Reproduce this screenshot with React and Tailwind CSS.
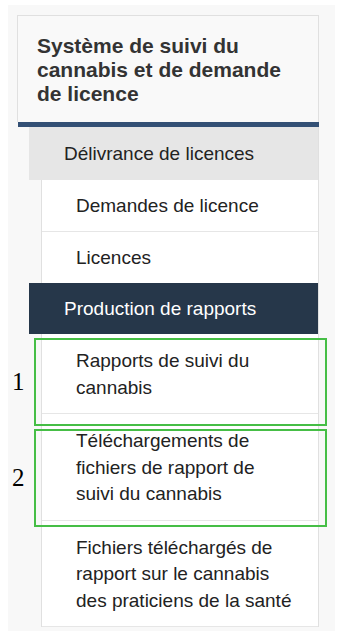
const subItems = [
  { label: "Demandes de licence" },
  { label: "Licences" },
];

const reportItems = [
  { label: "Rapports de suivi du cannabis", lines: ["Rapports de suivi du", "cannabis"] },
  { label: "Téléchargements", lines: ["Téléchargements de", "fichiers de rapport de", "suivi du cannabis"] },
  { label: "Fichiers", lines: ["Fichiers téléchargés de", "rapport sur le cannabis", "des praticiens de la santé"] },
];

function Annotation({ top, height, num }) {
  return (
    <>
      <div
        className="absolute left-[34px] w-[293px] border-2 border-[#46be46]"
        style={{ top, height }}
      />
      <span
        className="absolute left-[12px] text-[25px] leading-none text-black"
        style={{ top: top + height / 2 - 13, fontFamily: '"Liberation Serif", serif' }}
      >
        {num}
      </span>
    </>
  );
}

export default function App() {
  return (
    <div className="relative h-[635px] w-[347px] bg-white" style={{ fontFamily: '"Liberation Sans", Arial, sans-serif' }}>
      <div className="ml-[8px] mt-[5px] w-[327px] bg-[#f8f8f8] pb-[4px] pl-[9px] pt-[10px] pr-[16px]">
        <nav className="w-[302px]">
          <div className="border border-b-0 border-[#e0e0e0] bg-[#f9f9f9] pb-[16px] pl-[19px] pr-[10px] pt-[18px]">
            <h2 className="text-[21px] font-bold leading-[24px] text-[#333]">
              Système de suivi du cannabis et de demande de licence
            </h2>
          </div>
          <div className="ml-px h-[5px] bg-[#335075]" />

          <div className="ml-[12px] border-r border-[#e0e0e0]">
            <div className="bg-[#e6e6e6] py-[13px] pl-[35px] text-[19px] leading-[27px] text-[#222]">
              Délivrance de licences
            </div>
            <ul className="ml-[12px] border-l border-[#e0e0e0] bg-white">
              {subItems.map((item) => (
                <li
                  key={item.label}
                  className="border-b border-[#e6e6e6] py-[12px] pl-[34px] text-[19px] leading-[27px] text-[#222] last:border-b-0"
                >
                  {item.label}
                </li>
              ))}
            </ul>
            <div className="bg-[#26374a] py-[12px] pl-[35px] text-[19px] leading-[27px] text-white">
              Production de rapports
            </div>
            <ul className="ml-[12px] border-l border-[#e0e0e0] bg-white">
              {reportItems.map((item) => (
                <li
                  key={item.label}
                  className="border-b border-[#e6e6e6] pb-[12px] pl-[34px] pt-[14px] text-[19px] leading-[26.5px] text-[#222]"
                >
                  {item.lines.map((l) => (
                    <div key={l}>{l}</div>
                  ))}
                </li>
              ))}
            </ul>
          </div>
        </nav>
      </div>

      <Annotation top={333} height={88} num="1" />
      <Annotation top={424} height={98} num="2" />
    </div>
  );
}
